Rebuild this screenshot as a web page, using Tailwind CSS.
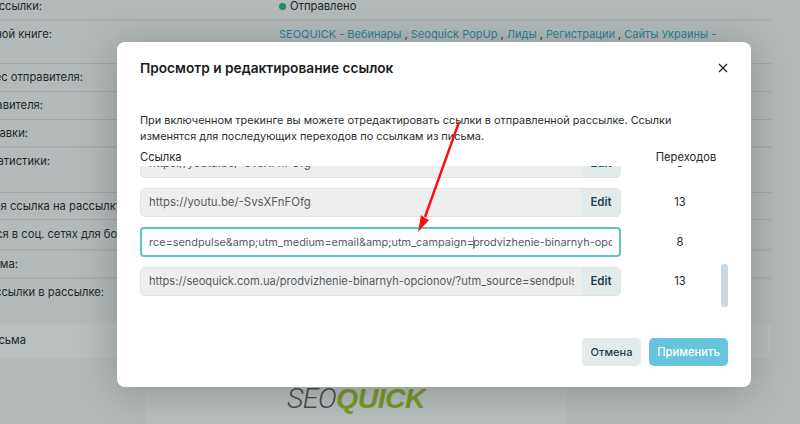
<!DOCTYPE html>
<html lang="ru">
<head>
<meta charset="UTF-8">
<title>Просмотр и редактирование ссылок</title>
<script src="https://cdn.jsdelivr.net/npm/@tailwindcss/browser@4"></script>
</head>
<body class="relative w-[800px] h-[424px] overflow-hidden bg-[#b4baba] font-['Inter','Noto_Sans',sans-serif] text-[11.2px] text-[#23282b]">

<!-- page under the overlay -->
<div class="w-[771px]">
  <div class="flex h-[21px] border-b-2 border-[#a9afaf] items-center pb-[7px]">
    <div class="w-[279px] flex justify-end pr-[237px] whitespace-nowrap">Статус рассылки:</div>
    <div class="flex items-center gap-[4px]"><span class="w-[7px] h-[7px] rounded-full bg-[#1f8f68]"></span>Отправлено</div>
  </div>
  <div class="flex h-[43px] border-b border-[#a3a9a9] pt-[5px]">
    <div class="w-[279px] flex justify-end pr-[227px] whitespace-nowrap">В адресной книге:</div>
    <div class="whitespace-nowrap text-[11px] text-[#2a8499]">SEOQUICK - Вебинары <span class="text-[#23282b]">,</span> Seoquick PopUp <span class="text-[#23282b]">,</span> Лиды <span class="text-[#23282b]">,</span> Регистрации <span class="text-[#23282b]">,</span> Сайты Украины -</div>
  </div>
  <div class="flex h-[28px] border-b border-[#a3a9a9] items-center"><div class="w-[279px] flex justify-end pr-[196px] whitespace-nowrap">Адрес отправителя:</div></div>
  <div class="flex h-[28px] border-b border-[#a3a9a9] items-center"><div class="w-[279px] flex justify-end pr-[236px] whitespace-nowrap">Имя отправителя:</div></div>
  <div class="flex h-[28px] border-b-2 border-[#a9afaf] items-center"><div class="w-[279px] flex justify-end pr-[251px] whitespace-nowrap">Дата отправки:</div></div>
  <div class="flex h-[45px] border-b border-[#a3a9a9] pt-[5px]"><div class="w-[279px] flex justify-end pr-[229px] whitespace-nowrap">Настройки статистики:</div></div>
  <div class="flex h-[27px] border-b border-[#a3a9a9] items-center"><div class="w-[279px] flex justify-end pr-[157px] whitespace-nowrap">Постоянная ссылка на рассылку</div></div>
  <div class="flex h-[31px] border-b-2 border-[#a9afaf] items-center"><div class="w-[279px] flex justify-end pr-[122px] whitespace-nowrap">Поделиться в соц. сетях для большего</div></div>
  <div class="flex h-[28px] border-b-2 border-[#a9afaf] items-center"><div class="w-[279px] flex justify-end pr-[261px] whitespace-nowrap">Тема письма:</div></div>
  <div class="flex h-[45px] pt-[5px]"><div class="w-[279px] flex justify-end pr-[175px] whitespace-nowrap">Добавление ссылки в рассылке:</div></div>
  <div class="flex h-[34px] bg-[#b9bfbf] items-center pb-[2px]"><div class="w-[279px] flex justify-end pr-[253px] whitespace-nowrap">Текст письма</div></div>
</div>
<div class="ml-[145px] w-[422px] h-[67px] bg-[#b9bebe] flex justify-center pt-[23px]">
  <div class="italic text-[28.5px] leading-[34px] tracking-[-0.6px] font-['Roboto',sans-serif]"><span class="font-light text-[#4a4d4e]">SEO</span><span class="font-['Liberation_Sans',sans-serif] font-bold text-[#789a28]">QUICK</span></div>
</div>

<!-- modal -->
<div class="absolute left-[117px] top-[42px] w-[634px] h-[345px] bg-white rounded-[8px] shadow-[0_4px_40px_rgba(0,0,0,0.25)] pl-[23px] pr-[23px]">
  <div class="flex items-center justify-between h-[52px]">
    <h2 class="text-[13.7px] font-semibold text-[#1a1d1f]">Просмотр и редактирование ссылок</h2>
    <svg class="w-[10px] h-[10px]" viewBox="0 0 10 10" fill="none" stroke="#23282b" stroke-width="1.4"><path d="M1 1l8 8M9 1l-8 8"/></svg>
  </div>
  <p class="mt-[18px] text-[10.9px] leading-[16px] text-[#2b3033]">При включенном трекинге вы можете отредактировать ссылки в отправленной рассылке. Ссылки<br>изменятся для последующих переходов по ссылкам из письма.</p>
  <div class="flex mt-[4px] h-[18px] items-center">
    <div class="w-[481px] shrink-0">Ссылка</div>
    <div class="w-[130px] shrink-0 text-center">Переходов</div>
  </div>
  <div class="relative h-[150px] w-[600px] overflow-hidden">
    <div class="flex flex-col gap-[10px] mt-[-17px]">
      <div class="flex items-center">
        <div class="flex w-[481px] shrink-0 h-[29px] rounded-[5px] overflow-hidden bg-[#eeeeee] border border-[#e2e2e2]">
          <div class="flex-1 px-[8px] leading-[27px] text-[#555b5e] text-[11.4px]">https://youtu.be/-SvsXFnFOfg</div>
          <div class="w-[38px] bg-[#e3eaea] text-center leading-[27px] font-semibold text-[#1d3f50] text-[11.5px]">Edit</div>
        </div>
        <div class="w-[118px] shrink-0 text-center">5</div>
      </div>
      <div class="flex items-center">
        <div class="flex w-[481px] shrink-0 h-[29px] rounded-[5px] overflow-hidden bg-[#eeeeee] border border-[#e2e2e2]">
          <div class="flex-1 px-[8px] leading-[27px] text-[#555b5e] text-[11.4px]">https://youtu.be/-SvsXFnFOfg</div>
          <div class="w-[38px] bg-[#e3eaea] text-center leading-[27px] font-semibold text-[#1d3f50] text-[11.5px]">Edit</div>
        </div>
        <div class="w-[118px] shrink-0 text-center">13</div>
      </div>
      <div class="flex items-center">
        <div class="w-[481px] shrink-0 h-[30px] rounded-[4px] bg-white border-2 border-[#5cc3cf] px-[7px] leading-[26px] text-[#555b5e] text-[10.9px] overflow-hidden whitespace-nowrap">
          <div class="overflow-hidden">rce=sendpulse&amp;amp;utm_medium=email&amp;amp;utm_campaign=<span class="inline-block w-px h-[12px] -mx-px align-middle bg-[#888]"></span>prodvizhenie-binarnyh-opcionov</div>
        </div>
        <div class="w-[118px] shrink-0 text-center">8</div>
      </div>
      <div class="flex items-center">
        <div class="flex w-[481px] shrink-0 h-[29px] rounded-[5px] overflow-hidden bg-[#eeeeee] border border-[#e2e2e2]">
          <div class="flex-1 min-w-0 pl-[8px] mr-[8px] leading-[27px] text-[#555b5e] text-[11.1px] overflow-hidden whitespace-nowrap">https://seoquick.com.ua/prodvizhenie-binarnyh-opcionov/?utm_source=sendpulse</div>
          <div class="w-[38px] shrink-0 bg-[#e3eaea] text-center leading-[27px] font-semibold text-[#1d3f50] text-[11.5px]">Edit</div>
        </div>
        <div class="w-[118px] shrink-0 text-center">13</div>
      </div>
    </div>
    <div class="absolute left-[581px] top-[98px] w-[7px] h-[43px] rounded-[3px] bg-[#cbd7e0]"></div>
  </div>
  <div class="flex justify-end gap-[8px] mt-[22px]">
    <button class="w-[59px] h-[28px] rounded-[5px] bg-[#e3eaea] font-medium text-[11px] text-[#1d3f50]">Отмена</button>
    <button class="w-[79px] h-[28px] rounded-[5px] bg-[#66c4dc] font-medium text-[11.2px] text-white">Применить</button>
  </div>
</div>

<!-- annotation arrow -->
<svg class="absolute left-0 top-0 w-[800px] h-[424px] pointer-events-none" viewBox="0 0 800 424" fill="none">
  <path d="M459 122L425 217" stroke="#f80f0f" stroke-width="2.4"/>
  <path d="M418 232L421 215L425 218L429 220Z" fill="#f80f0f"/>
</svg>
</body>
</html>
